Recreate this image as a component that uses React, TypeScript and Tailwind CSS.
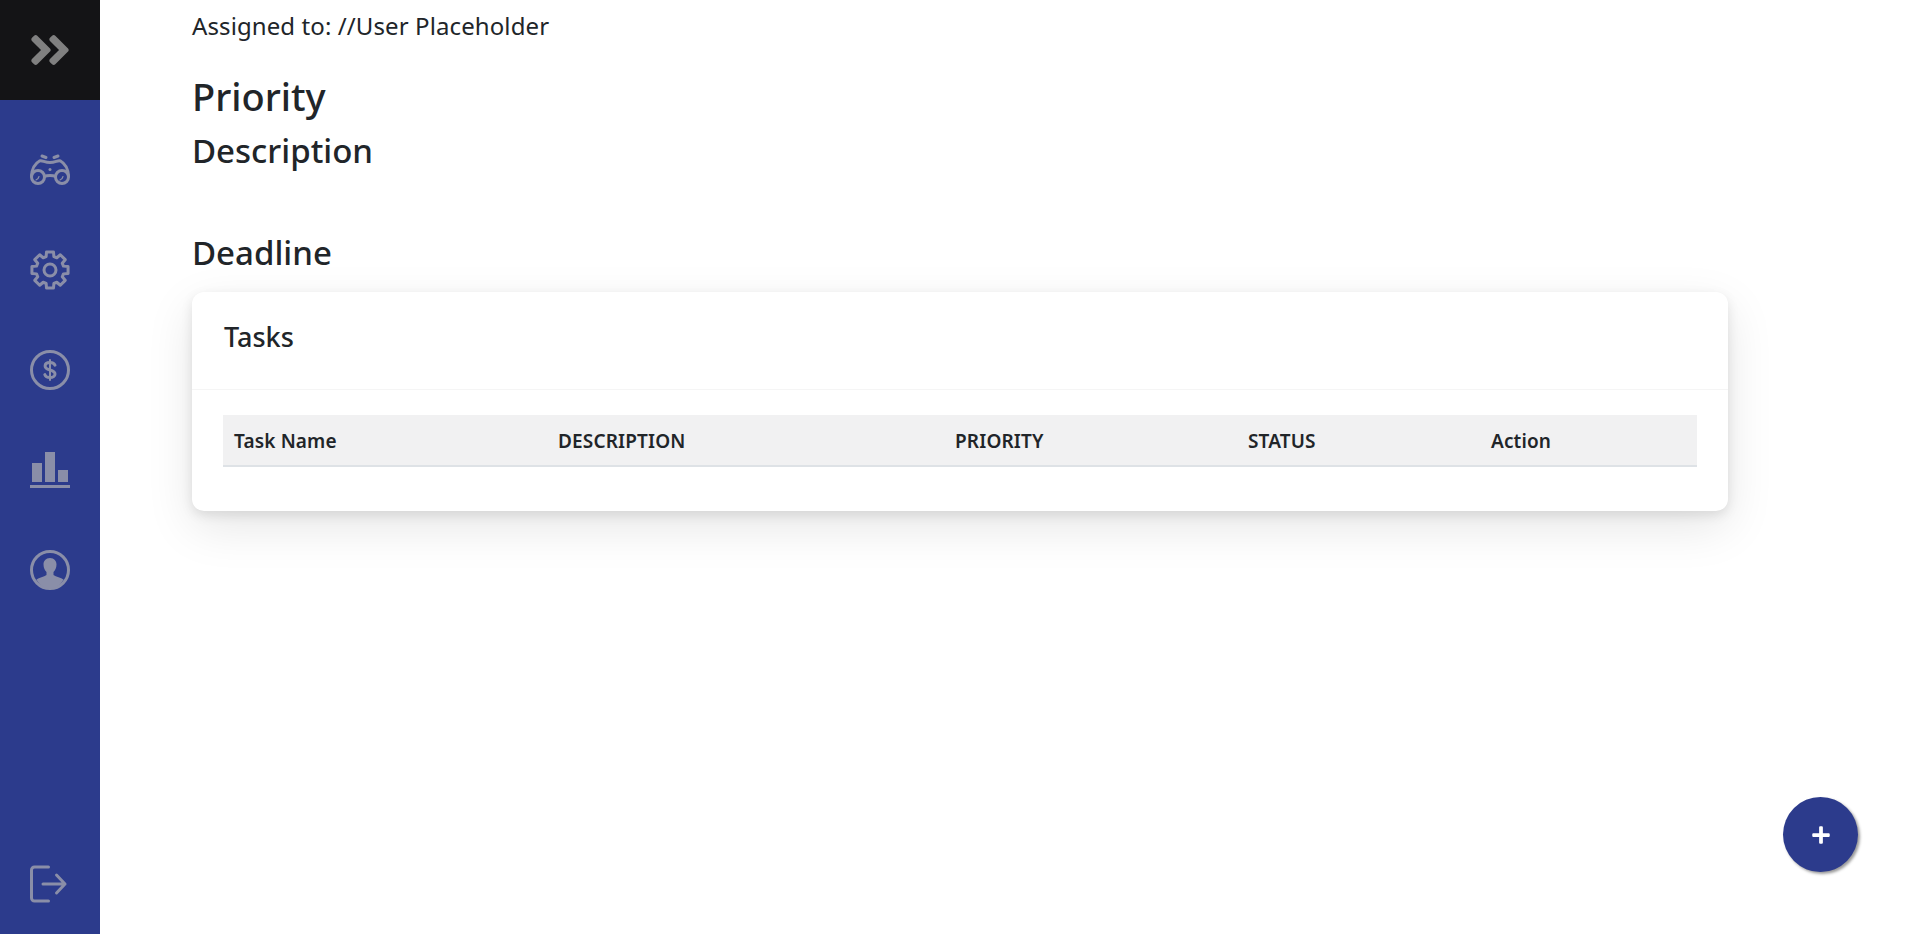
import { FaAngleDoubleRight, FaPlus } from "react-icons/fa";

const gearPath = (() => {
  const teeth = 8;
  const pts: string[] = [];
  for (let i = 0; i < teeth; i++) {
    const step = (Math.PI * 2) / teeth;
    const a = i * step - Math.PI / 2;
    const at = (r: number, d: number) =>
      `${(20 + r * Math.cos(a + d)).toFixed(2)} ${(20 + r * Math.sin(a + d)).toFixed(2)}`;
    pts.push(at(18.4, -0.19), at(18.4, 0.19), at(14, 0.28), at(14, step - 0.28));
  }
  return "M" + pts.join("L") + "Z";
})();

function Binoculars() {
  return (
    <svg width="40" height="40" viewBox="0 0 40 40" fill="none" stroke="currentColor" strokeWidth="3" strokeLinecap="round">
      <circle cx="8" cy="27" r="6.5" />
      <circle cx="32" cy="27" r="6.5" />
      <path d="M1.5 26C2 19 5 13.5 9.5 11C12 10 14.5 12.5 20 12.5C25.5 12.5 28 10 30.5 11C35 13.5 38 19 38.5 26" />
      <path d="M14.5 26.5C17 25 23 25 25.5 26.5" />
      <path d="M12 6L16 7.5M28 6L24 7.5" />
      <path d="M6 30C7.5 29.5 8.5 28.5 9 26.5M30 30C31.5 29.5 32.5 28.5 33 26.5" strokeWidth="1.2" />
      <circle cx="20" cy="19.5" r="1.5" fill="currentColor" stroke="none" />
    </svg>
  );
}

function Gear() {
  return (
    <svg width="40" height="40" viewBox="0 0 40 40" fill="none" stroke="currentColor" strokeWidth="3" strokeLinejoin="round">
      <path d={gearPath} />
      <circle cx="20" cy="20" r="6" />
    </svg>
  );
}

function Dollar() {
  return (
    <svg width="40" height="40" viewBox="0 0 40 40" fill="none" stroke="currentColor" strokeWidth="3" strokeLinecap="round">
      <circle cx="20" cy="20" r="18.5" />
      <path d="M25 15.2C24.4 13.4 22.6 12.4 20 12.4C17 12.4 15.1 13.9 15.1 16C15.1 18.2 17 19.2 20 20C23 20.8 25 21.8 25 24C25 26.1 23 27.6 20 27.6C17.2 27.6 15.4 26.5 14.8 24.6" />
      <path d="M20 10V30" strokeWidth="2" />
    </svg>
  );
}

function Bars() {
  return (
    <svg width="40" height="40" viewBox="0 0 40 40" fill="currentColor">
      <rect x="2" y="13" width="10" height="19" />
      <rect x="15" y="2" width="10" height="30" />
      <rect x="28" y="20" width="10" height="12" />
      <rect x="0" y="35" width="40" height="3" />
    </svg>
  );
}

function UserCircle() {
  return (
    <svg width="40" height="40" viewBox="0 0 40 40" fill="none" stroke="currentColor" strokeWidth="3">
      <circle cx="20" cy="20" r="18.5" />
      <path
        fill="currentColor"
        stroke="none"
        d="M20 8C15.8 8 13.5 11 13.5 14.5C13.5 18 15 20.5 16.5 22V25C14 27 9 27.5 6.5 29.5C9.5 35 14.5 38.5 20 38.5C25.5 38.5 30.5 35 33.5 29.5C31 27.5 26 27 23.5 25V22C25 20.5 26.5 18 26.5 14.5C26.5 11 24.2 8 20 8Z"
      />
    </svg>
  );
}

function Logout() {
  return (
    <svg width="40" height="40" viewBox="0 0 40 40" fill="none" stroke="currentColor" strokeWidth="3" strokeLinecap="round" strokeLinejoin="round">
      <path d="M18.5 3H4.5C2.8 3 1.5 4.3 1.5 6V34C1.5 35.7 2.8 37 4.5 37H18.5" />
      <path d="M13 20H35M26.5 11L35 20L26.5 29" />
    </svg>
  );
}

const navIcons = [Binoculars, Gear, Dollar, Bars, UserCircle];
const columns = ["Task Name", "DESCRIPTION", "PRIORITY", "STATUS", "Action"];

export default function App() {
  return (
    <div className="flex h-screen overflow-hidden bg-white font-['Noto_Sans',sans-serif] text-[#212529]">
      {/* Sidebar */}
      <aside className="flex w-[100px] shrink-0 flex-col bg-[#2c3b8c] text-[#8a8ea8]">
        <div className="flex h-[100px] items-center justify-center bg-[#141416] text-[#808080]">
          <FaAngleDoubleRight size={48} />
        </div>
        <nav className="flex flex-col items-center pt-5">
          {navIcons.map((Icon, i) => (
            <a key={i} href="#" className="flex h-[100px] w-full items-center justify-center">
              <Icon />
            </a>
          ))}
        </nav>
        <a href="#" className="mt-auto mb-[30px] flex h-[40px] items-center justify-center">
          <Logout />
        </a>
      </aside>

      {/* Main */}
      <main className="flex-1 pl-[92px]">
        <p className="mt-[9px] text-[24px] leading-[34px] tracking-[0.1px]">Assigned to: //User Placeholder</p>
        <h2 className="mt-[31px] text-[38px] leading-[44px] font-medium">Priority</h2>
        <h3 className="mt-[14px] text-[33px] leading-[38px] font-medium">Description</h3>
        <h3 className="mt-[64px] text-[33px] leading-[38px] font-medium">Deadline</h3>

        <section className="mt-[20px] h-[219px] w-[1536px] rounded-xl bg-white shadow-[0_1rem_3rem_rgba(0,0,0,0.1),0_0.25rem_0.75rem_rgba(0,0,0,0.1)]">
          <div className="h-[98px] border-b border-[#f5f5f5] px-8 pt-[25px]">
            <h4 className="text-[27px] leading-[40px] font-medium">Tasks</h4>
          </div>
          <div className="px-[31px] pt-[25px]">
            <div className="grid h-[52px] grid-cols-[324px_397px_293px_243px_217px] items-center border-b-2 border-[#dee2e6] bg-[#f1f1f2] pt-[2px] text-[19px] font-semibold tracking-[0.15px]">
              {columns.map((c) => (
                <div key={c} className="px-[11px]">
                  {c}
                </div>
              ))}
            </div>
          </div>
        </section>
      </main>

      <button className="fixed right-[62px] bottom-[62px] flex h-[75px] w-[75px] items-center justify-center rounded-full bg-[#2c3b8c] text-white shadow-[2px_2px_3px_#999]">
        <FaPlus size={20} />
      </button>
    </div>
  );
}
